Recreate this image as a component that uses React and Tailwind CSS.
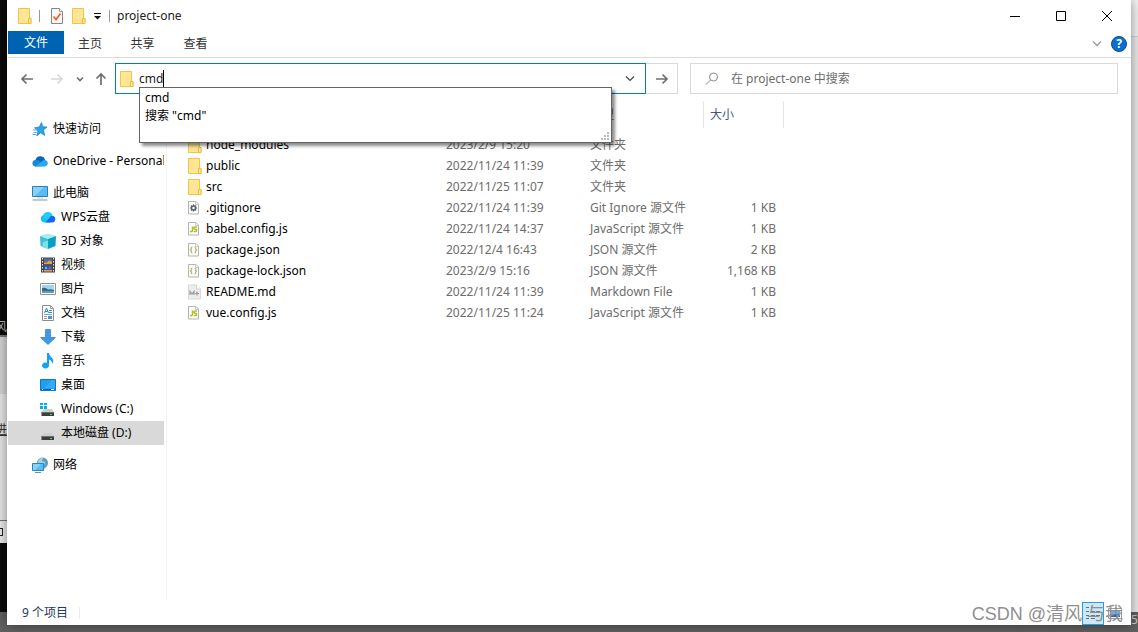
import React from "react";

const Folder = ({ className = "" }) => (
  <svg className={"shrink-0 " + className} width="14" height="16" viewBox="0 0 14 16" aria-hidden="true">
    <path d="M.5.5h11v10h1.500v5H.5z" fill="#ffe594" stroke="#edc54b" />
    <path d="M10.500 15.500v-5h2.500v5z" fill="#ffe9a5" stroke="#e9bd3c" />
  </svg>
);

const Page = ({ children }) => (
  <svg className="shrink-0" width="14" height="16" viewBox="1 0 14 16" aria-hidden="true">
    <path d="M1.500 1.500h7.500l2.500 2.500v10h-10z" fill="#fcfcfc" stroke="#b4b4b4" />
    <path d="M8.500 1.500v3h3" fill="none" stroke="#c8c8c8" />
    {children}
  </svg>
);

const fileIcons = {
  folder: <Folder />,
  git: (
    <Page>
      <g stroke="#52616b" strokeWidth="1.500">
        <circle cx="6.500" cy="8" r="2" fill="none" />
        <path d="M6.500 4.500v1.500M6.500 10v1.500M3 8h1.500M8.500 8H10M4 5.500l1 1M8 9.500l1 1M9 5.500l-1 1M5 9.500l-1 1" strokeWidth="1.200" />
      </g>
    </Page>
  ),
  js: (
    <Page>
      <path d="M5.500 5.500v4q0 1-1 1H3M10 6H8q-1 0-1 1t1 1.200h.5q1.200 0 1.200 1.100t-1.200 1.200H6.800" fill="none" stroke="#b3bf28" strokeWidth="1.500" />
    </Page>
  ),
  json: (
    <Page>
      <path d="M5.500 5q-1.200 0-1.200 1.200v1l-.8.8.8.8v1q0 1.200 1.200 1.200M7.500 5q1.200 0 1.200 1.200v1l.8.8-.8.8v1q0 1.200-1.200 1.200" fill="none" stroke="#a9b86e" strokeWidth="1.200" />
    </Page>
  ),
  md: (
    <svg className="shrink-0" width="14" height="16" viewBox="0 0 14 16" aria-hidden="true">
      <path d="M.5 1h8l4 4v10H.5z" fill="#ededed" stroke="#d8d8d8" />
      <path d="M8.500 1v4h4" fill="#fff" stroke="#d2d2d2" />
      <path d="M2 11V7.500L4 10l2-2.500V11M7 9.500h4M9 7.500v4" fill="none" stroke="#999" strokeWidth="1.200" />
    </svg>
  ),
};

const files = [
  ["folder", "node_modules", "2023/2/9 15:20", "文件夹", ""],
  ["folder", "public", "2022/11/24 11:39", "文件夹", ""],
  ["folder", "src", "2022/11/25 11:07", "文件夹", ""],
  ["git", ".gitignore", "2022/11/24 11:39", "Git Ignore 源文件", "1 KB"],
  ["js", "babel.config.js", "2022/11/24 14:37", "JavaScript 源文件", "1 KB"],
  ["json", "package.json", "2022/12/4 16:43", "JSON 源文件", "2 KB"],
  ["json", "package-lock.json", "2023/2/9 15:16", "JSON 源文件", "1,168 KB"],
  ["md", "README.md", "2022/11/24 11:39", "Markdown File", "1 KB"],
  ["js", "vue.config.js", "2022/11/25 11:24", "JavaScript 源文件", "1 KB"],
];

const Icon = ({ children }) => (
  <svg className="shrink-0" width="16" height="16" viewBox="0 0 16 16" aria-hidden="true">
    {children}
  </svg>
);

const Drive = () => (
  <>
    <path d="M4 8h8l2 3H1.500z" fill="#cfcfcf" />
    <path d="M1.500 11H14v4H1.500z" fill="#3b3f42" />
    <path d="M1.500 11H14v1H1.500z" fill="#6b6f71" />
    <path d="M10 13h2v1h-2z" fill="#4be04b" />
  </>
);

const navIcons = {
  star: (
    <Icon>
      <path d="M9.500 1.500l1.300 4.300 4.200.2-3.500 3 1.200 5.500-4-2.800-4 3.300 1.300-5-3.500-3.200 4.700-.8z" fill="#2aa3ee" stroke="#1480c9" strokeWidth=".7" />
      <path d="M1 9h4M1.500 11.500h3M.5 13.500h3.500" stroke="#5aa9dc" />
    </Icon>
  ),
  onedrive: (
    <Icon>
      <path d="M3.500 7A5 5 0 0 1 13 6.500l-2 4-8-1z" fill="#0c64b8" />
      <path d="M3.500 13.500a3.300 3.300 0 0 1-.5-6.500q2-.5 4 .8l6.500 5.200z" fill="#1689d8" />
      <path d="M3 13.500l8-6q1.500-1 3-.2a3.300 3.300 0 0 1-1 6.200z" fill="#2ba8ed" />
    </Icon>
  ),
  pc: (
    <Icon>
      <path d="M.5 1.500h15v10H.5z" fill="#55bdf7" stroke="#3a7da8" />
      <path d="M1 2h11L3 11H1z" fill="#83d2fb" />
      <path d="M.5 15h15" stroke="#7d97a9" />
      <path d="M5 13h6" stroke="#b9cbd6" />
    </Icon>
  ),
  cloud: (
    <Icon>
      <path d="M4.500 13.500A3.800 3.800 0 0 1 3.800 6 5 5 0 0 1 12 5.500l-2 8z" fill="#19bff2" />
      <path d="M3 7a5 5 0 0 1 5-4q3 0 4.500 3.200L8 12z" fill="#22cdf5" />
      <path d="M5.500 13.500L10 8q1.500-1.800 3.200-1.200a3.500 3.500 0 0 1-.8 6.700z" fill="#1668f4" />
    </Icon>
  ),
  cube: (
    <Icon>
      <path d="M0 3L8 .5 16 3 8 6z" fill="#a6edf4" />
      <path d="M0 3l8 3v10l-7.500-3z" fill="#3cc1d3" />
      <path d="M8 6l8-3-.5 10L8 16z" fill="#06a0c5" />
      <path d="M3 9l5-1.500V16l-5.500-2z" fill="#81dee7" />
    </Icon>
  ),
  video: (
    <Icon>
      <path d="M1 .5h14v15H1z" fill="#444" />
      <path d="M2.500 1v14M13.500 1v14" stroke="#e9e9e9" strokeDasharray="1.500 1.500" />
      <path d="M4 1.500h8v6H4z" fill="#4375b5" />
      <path d="M4 8.500h8v6H4z" fill="#315cab" />
      <path d="M4 5.500h3l2-2 3 1v2.500H4zM4 13h8v1.500H4z" fill="#e5a13b" />
      <path d="M4.500 2.500h2v2h-2zM9 10h2v2H9z" fill="#cc4746" />
      <path d="M5 10h2v2H5z" fill="#7fa9e6" />
    </Icon>
  ),
  picture: (
    <Icon>
      <path d="M.5 2.500h15v11H.5z" fill="#fff" stroke="#929292" />
      <path d="M2 4h12v8H2z" fill="#a1d3f6" />
      <path d="M2 7q4-1 6 1.500 3-.5 6 .5v1.500H2z" fill="#387072" />
      <path d="M2 10.500h12V12H2z" fill="#5799d0" />
    </Icon>
  ),
  document: (
    <Icon>
      <path d="M2.500.5h8l3 3v12h-11z" fill="#fff" stroke="#8e8e8e" />
      <path d="M10.500.5v3h3" fill="none" stroke="#999" />
      <path d="M4.500 8l2-5 2 5M5 6.500h3M9 5.500h3M9 7.500h3" stroke="#1696e1" fill="none" />
      <path d="M4 9.500h8M4 11.500h3M4 13.500h3" stroke="#93a0aa" />
      <path d="M8 11h4v3H8z" fill="#4694c9" />
    </Icon>
  ),
  download: (
    <Icon>
      <path d="M5.500.5h5v8h5L8 15.500.5 8.500h5z" fill="#3c99e8" stroke="#287bbd" strokeWidth=".7" />
    </Icon>
  ),
  music: (
    <Icon>
      <path d="M7 0h2q0 2.500 2.500 4.500 3 2.500 1 6.500-.2-3-3.500-4.500v6a3.500 3 0 1 1-2-2.700z" fill="#15a0f5" />
    </Icon>
  ),
  desktop: (
    <Icon>
      <path d="M.5 2.500h15v11H.5z" fill="#1e9ff1" stroke="#0976c7" />
      <path d="M1 12.500h14" stroke="#0968ae" />
      <path d="M2 12.500h1M11 12.500h3" stroke="#fff" />
      <path d="M4 11l8-8h3v8z" fill="#35aaf5" />
    </Icon>
  ),
  windows: (
    <Icon>
      <Drive />
      <path d="M0 2h3v2H0zM4 2h3v2H4zM0 5h3v3H0zM4 5h3v3H4z" fill="#00adef" />
    </Icon>
  ),
  drive: (
    <Icon>
      <Drive />
    </Icon>
  ),
  network: (
    <Icon>
      <circle cx="10.500" cy="6" r="5.500" fill="#5e9dc2" />
      <path d="M6 4q3-4 5-3l-1 3 3 1-1 4H7z" fill="#a9d2dd" />
      <path d="M.5 6.500h11v7H.5z" fill="#54bef5" stroke="#2c83b7" />
      <path d="M1 7h8l-6 6H1z" fill="#85d3fa" />
      <path d="M3 15.500h6" stroke="#6a91a7" />
    </Icon>
  ),
};

const groups = [
  [["star", "快速访问"]],
  [["onedrive", "OneDrive - Personal"]],
  [
    ["pc", "此电脑"],
    ["cloud", "WPS云盘"],
    ["cube", "3D 对象"],
    ["video", "视频"],
    ["picture", "图片"],
    ["document", "文档"],
    ["download", "下载"],
    ["music", "音乐"],
    ["desktop", "桌面"],
    ["windows", "Windows (C:)"],
    ["drive", "本地磁盘 (D:)"],
  ],
  [["network", "网络"]],
];

const columns = [
  { label: "名称", text: "" },
  { label: "修改日期", text: "" },
  { label: "类型", text: "类型" },
  { label: "大小", text: "大小" },
];

const Arrow = ({ d, color = "#6f6f6f", width = 14 }) => (
  <svg width={width} height="14" viewBox={`0 0 ${width} 14`} fill="none" stroke={color} strokeWidth="1.700" aria-hidden="true">
    <path d={d} />
  </svg>
);

function TitleBar() {
  return (
    <header className="flex h-[31px] items-center pl-[10px]">
      <Folder />
      <span className="ml-[7px] h-3 w-px bg-[#999]" />
      <button className="ml-[10px]" aria-label="属性">
        <svg width="14" height="16" viewBox="0 0 14 16" aria-hidden="true">
          <path d="M1.500.5h8l3 3v12h-11z" fill="#f7f7f7" stroke="#858585" />
          <path d="M9.500.5v3h3" fill="#fff" stroke="#999" />
          <path d="M3.500 8.500l2.500 3 4.500-6" fill="none" stroke="#ed6429" strokeWidth="1.800" />
        </svg>
      </button>
      <button className="ml-2" aria-label="新建文件夹">
        <Folder />
      </button>
      <button className="ml-[7px]" aria-label="自定义快速访问工具栏">
        <svg width="9" height="8" viewBox="0 0 9 8" aria-hidden="true">
          <path d="M1 1.500h7" stroke="#111" />
          <path d="M1 4h7L4.500 7.500z" fill="#111" />
        </svg>
      </button>
      <span className="ml-[7px] h-3 w-px bg-[#999]" />
      <h1 className="ml-[7px] flex-1">project-one</h1>
      <div className="flex pr-px">
        <button className="grid h-[30px] w-[46px] place-items-center" aria-label="最小化">
          <svg width="10" height="10" viewBox="0 0 10 10" stroke="#000"><path d="M0 5.500h10" /></svg>
        </button>
        <button className="grid h-[30px] w-[46px] place-items-center" aria-label="最大化">
          <svg width="10" height="10" viewBox="0 0 10 10" stroke="#000" fill="none"><path d="M.5.5h9v9h-9z" /></svg>
        </button>
        <button className="grid h-[30px] w-[46px] place-items-center" aria-label="关闭">
          <svg width="10" height="10" viewBox="0 0 10 10" stroke="#000"><path d="M0 0l10 10M10 0L0 10" /></svg>
        </button>
      </div>
    </header>
  );
}

function Ribbon() {
  return (
    <nav className="flex h-[27px] items-start border-b border-[#dadbdc] text-[#333]">
      <button className="h-[23px] w-14 bg-[#0063b1] text-white">文件</button>
      <button className="h-[25px] w-[52px]">主页</button>
      <button className="h-[25px] w-[53px]">共享</button>
      <button className="h-[25px] w-[53px]">查看</button>
      <span className="flex-1" />
      <button className="mr-[9px] h-[25px]" aria-label="展开功能区">
        <svg width="10" height="6" viewBox="0 0 10 6" fill="none" stroke="#999" strokeWidth="1.300"><path d="M1 .5l4 4 4-4" /></svg>
      </button>
      <button className="mt-[5px] mr-1 grid size-4 place-items-center rounded-full border border-[#094f91] bg-[#0a6fd0] text-xs leading-3 font-bold text-white" aria-label="帮助">
        ?
      </button>
    </nav>
  );
}

function AddressRow() {
  return (
    <div className="mt-[5px] flex h-[31px] gap-3 pr-[13px]">
      <div className="flex flex-[670]">
        <div className="flex w-[107px] shrink-0 items-center pl-3">
          <button aria-label="后退"><Arrow d="M13 7H2M6.500 2.500L2 7l4.500 4.500" /></button>
          <button className="ml-4" aria-label="前进"><Arrow d="M1 7h11M7.500 2.500L12 7l-4.500 4.500" color="#d8d8d8" /></button>
          <button className="ml-3" aria-label="最近浏览的位置"><Arrow width={8} d="M1 5.500l3 3 3-3" /></button>
          <button className="ml-[10px]" aria-label="上移"><Arrow d="M7 13V2M2.500 6.500L7 2l4.500 4.500" /></button>
        </div>
        <div className="relative flex min-w-0 flex-1 items-center border border-[#0078d7] pl-1">
          <Folder />
          <label htmlFor="address" className="sr-only">地址</label>
          <div className="ml-[5px] flex min-w-0 flex-1 items-center">
            <input id="address" className="field-sizing-content min-w-0 bg-transparent outline-none" defaultValue="cmd" />
            <span className="h-[17px] w-px bg-black" />
          </div>
          <button className="mr-[10px]" aria-label="展开地址列表">
            <svg width="10" height="6" viewBox="0 0 10 6" fill="none" stroke="#444" strokeWidth="1.200"><path d="M1 .5l4 4 4-4" /></svg>
          </button>
          <div className="absolute top-[23px] right-[33px] left-[23px] z-10 h-14 border border-[#646464] bg-white pl-[5px] leading-[18px] text-black shadow-[3px_3px_3px_rgba(0,0,0,0.45)]" role="listbox" aria-label="地址建议">
            <div role="option" aria-selected="false" className="pt-px">cmd</div>
            <div role="option" aria-selected="false">搜索 "cmd"</div>
            <svg className="absolute right-[2px] bottom-[2px]" width="8" height="8" viewBox="0 0 8 8" fill="#b9b9b9" aria-hidden="true">
              <path d="M6 0h2v2H6zM3 3h2v2H3zM6 3h2v2H6zM0 6h2v2H0zM3 6h2v2H3zM6 6h2v2H6z" />
            </svg>
          </div>
        </div>
        <button className="grid w-8 shrink-0 place-items-center border border-l-0 border-[#d9d9d9]" aria-label="转到">
          <Arrow d="M1 7h11M7.500 2.500L12 7l-4.500 4.500" />
        </button>
      </div>
      <label className="flex min-w-0 flex-[412] items-center border border-[#d9d9d9] pl-[14px]">
        <svg width="14" height="14" viewBox="0 0 14 14" fill="none" stroke="#8a8a8a" aria-hidden="true">
          <circle cx="8.500" cy="5" r="4" /><path d="M5.500 8L1 12.500" />
        </svg>
        <span className="sr-only">搜索</span>
        <input className="ml-3 min-w-0 flex-1 bg-transparent outline-none placeholder:text-[#6d6d6d]" placeholder="在 project-one 中搜索" />
      </label>
    </div>
  );
}

function Sidebar() {
  return (
    <nav className="flex w-[158px] shrink-0 flex-col gap-2 overflow-hidden pt-[23px] text-black" aria-label="导航窗格">
      {groups.map((group, g) => (
        <ul key={g} className="mr-[2px]">
          {group.map(([icon, name], i) => (
            <li key={name}>
              <a
                href="#"
                className={
                  "flex h-6 items-center gap-[5px] overflow-hidden whitespace-nowrap " +
                  (i ? "pl-8 " : "pl-6 ") +
                  (icon === "drive" ? "bg-[#d9d9d9]" : "")
                }
              >
                {navIcons[icon]}
                <span>{name}</span>
              </a>
            </li>
          ))}
        </ul>
      ))}
    </nav>
  );
}

function FileTable() {
  return (
    <main className="min-w-0 flex-1 border-l border-[#f3f3f3] pt-[7px]">
      <table className="w-[617px] table-fixed border-collapse text-[#6d6d6d]">
        <colgroup>
          <col className="w-[273px]" />
          <col className="w-36" />
          <col className="w-[120px]" />
          <col className="w-20" />
        </colgroup>
        <thead>
          <tr className="text-left text-[#44597a]">
            {columns.map(({ label, text }) => (
              <th key={label} aria-label={label} className="p-0 pb-[6px] font-normal">
                <div className="flex h-[27px] items-center border-r border-[#e5e5e5] pl-[6px]">{text}</div>
              </th>
            ))}
          </tr>
        </thead>
        <tbody>
          {files.map(([icon, name, date, type, size]) => (
            <tr key={name} className="h-[21px] whitespace-nowrap">
              <td className="p-0 pl-[21px]">
                <span className="flex items-center gap-1 text-black">
                  {fileIcons[icon]}
                  {name}
                </span>
              </td>
              <td className="p-0 pl-[6px]">{date}</td>
              <td className="p-0 pl-[6px]">{type}</td>
              <td className="p-0 pr-2 text-right">{size}</td>
            </tr>
          ))}
        </tbody>
      </table>
    </main>
  );
}

function StatusBar() {
  return (
    <footer className="flex h-6 items-center pl-[14px] text-[#26395c]">
      <span>9 个项目</span>
      <span className="ml-[11px] h-3 w-px bg-[#ececec]" />
      <span className="flex-1" />
      <button className="grid h-[23px] w-[22px] place-items-center border border-[#26a0da] bg-[#cce8f6]" aria-label="详细信息">
        <svg width="16" height="14" viewBox="0 0 16 14" stroke="#65727a"><path d="M1 1.500h3M6 1.500h4M11 1.500h4M1 5.500h3M6 5.500h4M11 5.500h4M1 9.500h3M6 9.500h4M11 9.500h4M1 12.500h3M6 12.500h4" /></svg>
      </button>
      <button className="mr-[5px] grid h-[23px] w-[22px] place-items-center" aria-label="大缩略图">
        <svg width="14" height="11" viewBox="0 0 14 11"><path d="M.5.5h13v10H.5z" fill="#fff" stroke="#999" /><path d="M2 2h10v4H2z" fill="#68b0ee" /><path d="M2 6h10v3H2z" fill="#2766b4" /></svg>
      </button>
    </footer>
  );
}

export default function App() {
  return (
    <div className="relative flex min-h-screen flex-col overflow-hidden bg-[#606060] font-['Noto_Sans','Noto_Sans_CJK_SC',sans-serif] text-xs text-[#222]">
      <div className="flex flex-1">
        <div className="flex w-[7px] shrink-0 flex-col overflow-hidden bg-[#0b0b0b] leading-4" aria-hidden="true">
          <div className="flex h-[337px] items-end justify-end border-b-2 border-[#777] text-[#bbb]">风</div>
          <div className="h-[57px] bg-[#d5d5d5]" />
          <div className="flex h-[127px] justify-end border-b border-[#777] bg-[#e7e7e7] pt-7 text-[#333] underline">进</div>
          <div className="flex h-[22px] items-center justify-end bg-[#ececec] pr-1">
            <span className="size-2 shrink-0 border border-[#222]" />
          </div>
          <div className="flex-1" />
          <div className="h-5 bg-[#606060]" />
        </div>
        <div className="z-10 mb-[7px] flex min-w-0 flex-1 flex-col bg-white pl-px shadow-[0_0_12px_rgba(0,0,0,0.45)]">
          <TitleBar />
          <Ribbon />
          <AddressRow />
          <div className="flex flex-1">
            <Sidebar />
            <FileTable />
          </div>
          <StatusBar />
        </div>
        <div className="flex w-[7px] shrink-0 flex-col overflow-hidden bg-[#ececec]" aria-hidden="true">
          <div className="h-[37px] border-b border-[#d5d5d5] bg-[#f5f5f5]" />
          <div className="flex-1" />
          <div className="h-5 bg-[#606060] leading-4 text-[#ccc]">53</div>
        </div>
      </div>
      <div className="pointer-events-none absolute right-[15px] bottom-1 z-20 font-['Liberation_Sans','Noto_Sans_CJK_SC',sans-serif] text-lg leading-7 whitespace-nowrap text-[#8f8f8f]">
        CSDN @清风 与我
      </div>
    </div>
  );
}
